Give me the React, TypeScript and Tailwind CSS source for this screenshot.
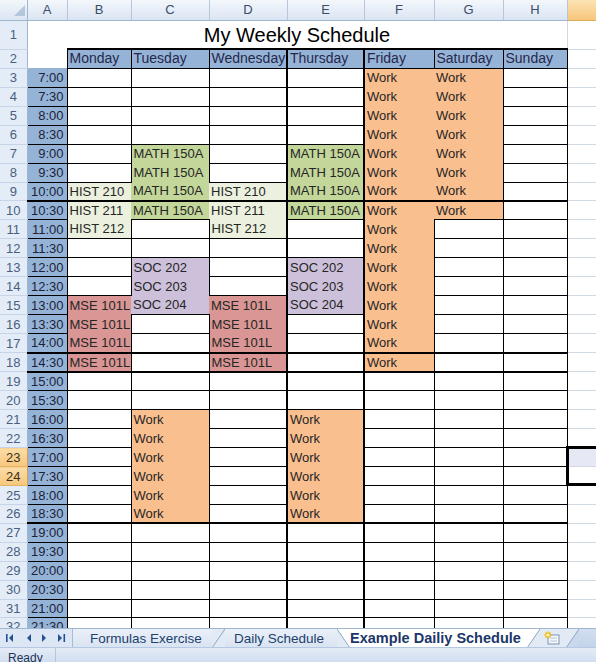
import clsx from 'clsx';

type Kind = 'work' | 'math' | 'hist' | 'soc' | 'mse';
type Cell = [string, Kind] | null;

const fills: Record<Kind, string> = {
  work: 'bg-[#fabf8f]',
  math: 'bg-[#c4d79b]',
  hist: 'bg-[#ebf1de]',
  soc: 'bg-[#ccc0da]',
  mse: 'bg-[#da9694]',
};

const _ = null;
const W: Cell = ['Work', 'work'];
const M: Cell = ['MATH 150A', 'math'];
const L: Cell = ['MSE 101L', 'mse'];
const E: Cell[] = [_, _, _, _, _, _, _];

// columns: B Mon, C Tue, D Wed, E Thu, F Fri, G Sat, H Sun
const schedule: Cell[][] = [
  [_, _, _, _, W, W, _],
  [_, _, _, _, W, W, _],
  [_, _, _, _, W, W, _],
  [_, _, _, _, W, W, _],
  [_, M, _, M, W, W, _],
  [_, M, _, M, W, W, _],
  [['HIST 210', 'hist'], M, ['HIST 210', 'hist'], M, W, W, _],
  [['HIST 211', 'hist'], M, ['HIST 211', 'hist'], M, W, W, _],
  [['HIST 212', 'hist'], _, ['HIST 212', 'hist'], _, W, _, _],
  [_, _, _, _, W, _, _],
  [_, ['SOC 202', 'soc'], _, ['SOC 202', 'soc'], W, _, _],
  [_, ['SOC 203', 'soc'], _, ['SOC 203', 'soc'], W, _, _],
  [L, ['SOC 204', 'soc'], L, ['SOC 204', 'soc'], W, _, _],
  [L, _, L, _, W, _, _],
  [L, _, L, _, W, _, _],
  [L, _, L, _, W, _, _],
  E,
  E,
  [_, W, _, W, _, _, _],
  [_, W, _, W, _, _, _],
  [_, W, _, W, _, _, _],
  [_, W, _, W, _, _, _],
  [_, W, _, W, _, _, _],
  [_, W, _, W, _, _, _],
  E,
  E,
  E,
  E,
  E,
  E,
];

const days = ['Monday', 'Tuesday', 'Wednesday', 'Thursday', 'Friday', 'Saturday', 'Sunday'];
const letters = ['A', 'B', 'C', 'D', 'E', 'F', 'G', 'H', 'I'];
const colWidths = ['w-[27px]', 'w-[40px]', 'w-[64px]', 'w-[78px]', 'w-[78px]', 'w-[77px]', 'w-[70px]', 'w-[69px]', 'w-[64px]', 'w-[64px]'];

const thickRows = [9, 17, 18, 26];
const shortRows = [9, 18, 26, 31];

function RowHead({ n }: { n: number }) {
  const sel = n === 23 || n === 24;
  return (
    <td
      className={clsx(
        'border-r border-b text-center text-[13px]',
        sel
          ? 'bg-linear-to-b from-[#fbdca6] to-[#f7c77c] border-b-[#e2b46a] border-r-[#c9a060] text-[#3a3020]'
          : 'bg-[#e4ecf7] border-b-[#c6d4e7] border-r-[#9eb6ce] text-[#4a5f80]'
      )}
    >
      <div className="leading-[17px]">{n}</div>
    </td>
  );
}

function Grid() {
  return (
    <table className="w-[631px] table-fixed">
      <colgroup>
        {colWidths.map((w, i) => (
          <col key={i} className={w} />
        ))}
      </colgroup>
      <tbody>
        <tr className="h-[20px]">
          <td className="border-r border-b border-[#9eb6ce] bg-linear-to-b from-[#f3f7fb] to-[#dbe5f2]">
            <div className="flex h-[19px] items-end justify-end pb-[3px] pr-[2px]">
              <svg width="11" height="11" viewBox="0 0 11 11">
                <polygon points="11,0 11,11 0,11" fill="#b4c6dd" />
              </svg>
            </div>
          </td>
          {letters.map((l) => (
            <td
              key={l}
              className={clsx(
                'border-r border-b text-center text-[13px] text-[#3b4d6b]',
                l === 'I'
                  ? 'bg-linear-to-b from-[#fce3b4] to-[#f6c57a] border-[#e0ad5e]'
                  : 'bg-linear-to-b from-[#f3f7fb] to-[#dae4f2] border-r-[#b6c7dc] border-b-[#9eb6ce]'
              )}
            >
              <div className="leading-[18px]">{l}</div>
            </td>
          ))}
        </tr>

        <tr className="h-[29px]">
          <RowHead n={1} />
          <td colSpan={8} className="pb-[2px] text-center align-bottom text-[20px] leading-[22px] text-black">
            My Weekly Schedule
          </td>
          <td className="border-l border-b border-[#d0d7e5]" />
        </tr>

        <tr className="h-[19px]">
          <RowHead n={2} />
          <td />
          {days.map((d, i) => (
            <td
              key={d}
              className={clsx(
                'border border-t-2 border-black bg-[#95b3d7] text-[14px] text-[#26284a]',
                (i === 2 || i === 3) && 'border-r-2'
              )}
            >
              <div className="overflow-hidden whitespace-nowrap pl-[2px] leading-[17px]">{d}</div>
            </td>
          ))}
          <td className="border-b border-[#d0d7e5]" />
        </tr>

        {schedule.map((cells, i) => {
          const r = i + 3;
          const hour = 7 + Math.floor(i / 2);
          const time = `${hour}:${i % 2 ? '30' : '00'}`;
          const thick = thickRows.includes(r);
          return (
            <tr key={r} className={shortRows.includes(r) ? 'h-[18px]' : 'h-[19px]'}>
              <RowHead n={r} />
              <td
                className={clsx(
                  'border-r border-b border-black bg-[#95b3d7] text-right text-[#1c2338]',
                  thick && 'border-b-2'
                )}
              >
                <div className="pr-[3px] leading-[17px]">{time}</div>
              </td>
              {cells.map((c, ci) => (
                <td
                  key={ci}
                  className={clsx(
                    c ? fills[c[1]] : 'border border-black',
                    thick && 'border-b-2 border-b-black',
                    (ci === 2 || ci === 3) && 'border-r-2 border-r-black',
                    'text-[#262626]'
                  )}
                >
                  <div className="overflow-hidden whitespace-nowrap pl-[2px] leading-[17px]">{c ? c[0] : ''}</div>
                </td>
              ))}
              <td
                className={clsx(
                  'relative border-b border-[#d0d7e5]',
                  r === 23 && 'bg-[#e6e9f5]'
                )}
              >
                {r === 23 && (
                  <div className="absolute left-[-2px] top-[-2px] h-[40px] w-[80px] border-[3px] border-black" />
                )}
                <div className="leading-[17px]">&nbsp;</div>
              </td>
            </tr>
          );
        })}
      </tbody>
    </table>
  );
}

function Slant({ from, to, dir = 'up' }: { from: string; to: string; dir?: 'up' | 'down' }) {
  return (
    <svg width="13" height="19" viewBox="0 0 13 19" className="shrink-0">
      {dir === 'up' ? (
        <>
          <polygon points="0,0 13,0 0,19" fill={from} />
          <polygon points="13,0 13,19 0,19" fill={to} />
          <line x1="0" y1="19" x2="13" y2="0" stroke="#8ea7c9" strokeWidth="1" />
        </>
      ) : (
        <>
          <polygon points="0,0 0,19 13,19" fill={from} />
          <polygon points="0,0 13,0 13,19" fill={to} />
          <line x1="0" y1="0" x2="13" y2="19" stroke="#8ea7c9" strokeWidth="1" />
        </>
      )}
    </svg>
  );
}

function TabBar() {
  return (
    <div className="flex h-[19px] shrink-0 items-stretch border-t border-[#9eb6ce] bg-[#dce6f4] text-[13.5px]">
      <div className="w-[73px] shrink-0 border-r border-[#a7bcd8]">
        <svg width="73" height="18" viewBox="0 0 73 18">
          <g fill="#24518f">
            <rect x="6" y="5" width="1.6" height="8" />
            <polygon points="13,5 13,13 9,9" />
            <polygon points="31,5 31,13 27,9" />
            <polygon points="42,5 42,13 46,9" />
            <polygon points="58,5 58,13 62,9" />
            <rect x="63.5" y="5" width="1.6" height="8" />
          </g>
        </svg>
      </div>
      <div className="flex w-[139px] shrink-0 items-center bg-linear-to-b from-[#eaf0f8] to-[#d9e4f2] pl-[17px] text-[#22406c]">
        <span className="leading-[17px]">Formulas Exercise</span>
      </div>
      <Slant from="#e2eaf5" to="#e2eaf5" />
      <div className="flex w-[112px] shrink-0 items-center bg-linear-to-b from-[#eaf0f8] to-[#d9e4f2] pl-[9px] text-[#22406c]">
        <span className="leading-[17px]">Daily Schedule</span>
      </div>
      <Slant from="#e2eaf5" to="#ffffff" dir="down" />
      <div className="flex w-[177px] shrink-0 items-center bg-white text-[14.5px] font-bold text-[#1b3668]">
        <span className="leading-[17px]">Example Dailiy Schedule</span>
      </div>
      <Slant from="#ffffff" to="#e2eaf5" />
      <div className="flex w-[26px] shrink-0 items-center justify-center bg-[#e2eaf5]">
        <svg width="18" height="14" viewBox="0 0 18 14">
          <rect x="4" y="4" width="11" height="9" fill="#f4f7fb" stroke="#7f93ad" strokeWidth="1" />
          <line x1="6" y1="7" x2="13" y2="7" stroke="#b7c4d6" />
          <line x1="6" y1="10" x2="13" y2="10" stroke="#b7c4d6" />
          <g stroke="#f2b705" strokeWidth="1.4">
            <line x1="4" y1="0.5" x2="4" y2="7.5" />
            <line x1="0.5" y1="4" x2="7.5" y2="4" />
            <line x1="1.5" y1="1.5" x2="6.5" y2="6.5" />
            <line x1="6.5" y1="1.5" x2="1.5" y2="6.5" />
          </g>
          <circle cx="4" cy="4" r="1.6" fill="#fff6c2" />
        </svg>
      </div>
      <Slant from="#e2eaf5" to="#c9d8ed" />
      <div className="flex-1 bg-linear-to-b from-[#d3dff0] to-[#c2d3ea]" />
    </div>
  );
}

export default function App() {
  return (
    <div className="flex h-[662px] w-[596px] flex-col overflow-hidden bg-white font-['Liberation_Sans',Arial,sans-serif] text-[13px] text-[#1e1e1e]">
      <div className="h-[628px] shrink-0 overflow-hidden">
        <Grid />
      </div>
      <TabBar />
      <div className="flex flex-1 items-start border-t border-[#b7c9e2] bg-linear-to-b from-[#e3ebf6] to-[#cedcee]">
        <div className="w-[56px] border-r border-[#b3c5dd] pl-[8px] pt-[3px] text-[12px] leading-[14px] text-[#1d3558]">
          Ready
        </div>
      </div>
    </div>
  );
}
